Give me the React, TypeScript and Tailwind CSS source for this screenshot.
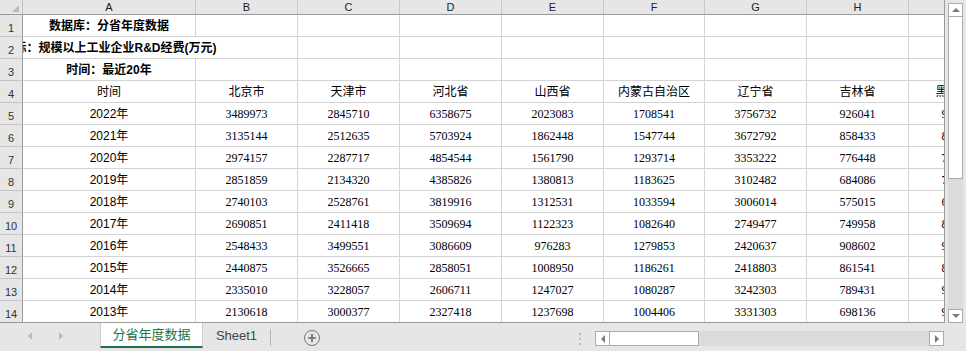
import clsx from "clsx";

const columns = ["A", "B", "C", "D", "E", "F", "G", "H", "I"];

const provinces = [
  "北京市",
  "天津市",
  "河北省",
  "山西省",
  "内蒙古自治区",
  "辽宁省",
  "吉林省",
  "黑龙江省",
];

const data: string[][] = [
  ["2022年", "3489973", "2845710", "6358675", "2023083", "1708541", "3756732", "926041", "952316"],
  ["2021年", "3135144", "2512635", "5703924", "1862448", "1547744", "3672792", "858433", "835227"],
  ["2020年", "2974157", "2287717", "4854544", "1561790", "1293714", "3353222", "776448", "782204"],
  ["2019年", "2851859", "2134320", "4385826", "1380813", "1183625", "3102482", "684086", "719847"],
  ["2018年", "2740103", "2528761", "3819916", "1312531", "1033594", "3006014", "575015", "673158"],
  ["2017年", "2690851", "2411418", "3509694", "1122323", "1082640", "2749477", "749958", "826431"],
  ["2016年", "2548433", "3499551", "3086609", "976283", "1279853", "2420637", "908602", "915727"],
  ["2015年", "2440875", "3526665", "2858051", "1008950", "1186261", "2418803", "861541", "869504"],
  ["2014年", "2335010", "3228057", "2606711", "1247027", "1080287", "3242303", "789431", "942618"],
  ["2013年", "2130618", "3000377", "2327418", "1237698", "1004406", "3331303", "698136", "917336"],
];

const Cell = ({
  children,
  className,
}: {
  children?: React.ReactNode;
  className?: string;
}) => (
  <div
    className={clsx(
      "flex items-center justify-center whitespace-nowrap border-b border-r border-[#d4d4d4] text-[12px] text-black",
      className
    )}
  >
    {children}
  </div>
);

const RowHead = ({ n }: { n: number }) => (
  <div className="relative z-10 flex items-end justify-center border-b border-r border-b-[#c4c4c4] border-r-[#9b9b9b] bg-[#e6e6e6] pb-[2px] text-[11px] leading-none text-[#333]">
    {n}
  </div>
);

const Arrow = ({ dir }: { dir: "up" | "down" | "left" | "right" }) => {
  const pts = {
    up: "0,5 4,1 8,5",
    down: "0,1 4,5 8,1",
    left: "5,0 1,4 5,8",
    right: "1,0 5,4 1,8",
  }[dir];
  const size = dir === "up" || dir === "down" ? [8, 6] : [6, 8];
  return (
    <svg width={size[0]} height={size[1]} viewBox={`0 0 ${size[0]} ${size[1]}`}>
      <polygon points={pts} fill="#7a7a7a" />
    </svg>
  );
};

export default function App() {
  return (
    <div className="flex h-[351px] w-[966px] flex-col overflow-hidden bg-[#e6e6e6] font-['Liberation_Sans','Noto_Sans_CJK_SC',sans-serif]">
      {/* Sheet + vertical scrollbar */}
      <div className="flex h-[323px]">
        <div className="h-[323px] w-[945px] overflow-hidden border-b border-r border-[#9b9b9b] bg-white">
          <div className="grid grid-cols-[23px_173px_102px_102px_102px_102px_101px_102px_102px_102px] grid-rows-[15px] auto-rows-[22px]">
            {/* corner */}
            <div className="relative z-10 flex items-end justify-end border-b border-r border-b-[#9b9b9b] border-r-[#bdbdbd] bg-[#e6e6e6] pb-[2px] pr-[3px]">
              <svg width="7" height="7" viewBox="0 0 7 7">
                <polygon points="7,0 7,7 0,7" fill="#b9b9b9" />
              </svg>
            </div>
            {columns.map((c) => (
              <div
                key={c}
                className="flex items-center justify-center border-b border-r border-b-[#9b9b9b] border-r-[#c8c8c8] bg-[#e6e6e6] text-[11px] leading-none text-[#222]"
              >
                {c}
              </div>
            ))}

            {/* title rows */}
            <RowHead n={1} />
            <Cell className="font-bold">数据库：分省年度数据</Cell>
            {columns.slice(1).map((c) => (
              <Cell key={"r1" + c} />
            ))}

            <RowHead n={2} />
            <Cell className="border-r-0 font-bold">指标：规模以上工业企业R&amp;D经费(万元)</Cell>
            {columns.slice(1).map((c) => (
              <Cell key={"r2" + c} />
            ))}

            <RowHead n={3} />
            <Cell className="font-bold">时间：最近20年</Cell>
            {columns.slice(1).map((c) => (
              <Cell key={"r3" + c} />
            ))}

            <RowHead n={4} />
            <Cell>时间</Cell>
            {provinces.map((p) => (
              <Cell key={p}>{p}</Cell>
            ))}

            {data.map((row, i) => (
              <div key={row[0]} className="contents">
                <RowHead n={i + 5} />
                {row.map((v, j) => (
                  <Cell
                    key={j}
                    className={
                      j === 0
                        ? ""
                        : "font-['Liberation_Serif','Noto_Sans_CJK_SC',serif]"
                    }
                  >
                    {v}
                  </Cell>
                ))}
              </div>
            ))}
          </div>
        </div>

        {/* vertical scrollbar */}
        <div className="flex w-[21px] flex-col px-[3px] pt-[3px]">
          <div className="flex flex-1 flex-col bg-[#dbdbdb]">
            <div className="flex h-[14px] items-center justify-center border border-[#ababab] bg-white">
              <Arrow dir="up" />
            </div>
            <div className="h-[162px] border-x border-b border-[#ababab] bg-white" />
            <div className="flex-1" />
            <div className="flex h-[14px] items-center justify-center border border-[#ababab] bg-white">
              <Arrow dir="down" />
            </div>
          </div>
        </div>
      </div>

      {/* Sheet tabs */}
      <div className="flex h-[28px] items-start">
        <div className="flex h-[25px] w-[100px] items-center gap-[25px] pl-[27px] opacity-40">
          <Arrow dir="left" />
          <Arrow dir="right" />
        </div>
        <div className="flex h-[25px] w-[103px] items-center justify-center border-b-2 border-x border-x-[#cfcfcf] border-b-[#217346] bg-white text-[13px] text-[#217346]">
          分省年度数据
        </div>
        <div className="flex h-[25px] w-[67px] items-center justify-center text-[13px] text-[#444]">
          Sheet1
        </div>
        <div className="mt-[6px] h-[17px] w-px bg-[#b4b4b4]" />
        <div className="ml-[33px] mt-[7px] flex h-[16px] w-[16px] items-center justify-center rounded-full border border-[#777]">
          <svg width="8" height="8" viewBox="0 0 8 8">
            <path d="M4 0v8M0 4h8" stroke="#666" strokeWidth="1.6" />
          </svg>
        </div>
        <div className="ml-[259px] mt-[10px] flex flex-col gap-[3px]">
          <div className="h-[2px] w-[2px] bg-[#b8b8b8]" />
          <div className="h-[2px] w-[2px] bg-[#b8b8b8]" />
          <div className="h-[2px] w-[2px] bg-[#b8b8b8]" />
        </div>
        {/* horizontal scrollbar */}
        <div className="ml-[14px] mt-[8px] flex h-[15px] w-[349px] bg-[#dbdbdb]">
          <div className="flex w-[15px] items-center justify-center border border-[#ababab] bg-white">
            <Arrow dir="left" />
          </div>
          <div className="w-[89px] border-y border-r border-[#ababab] bg-white" />
          <div className="flex-1" />
          <div className="flex w-[15px] items-center justify-center border border-[#ababab] bg-white">
            <Arrow dir="right" />
          </div>
        </div>
      </div>
    </div>
  );
}
